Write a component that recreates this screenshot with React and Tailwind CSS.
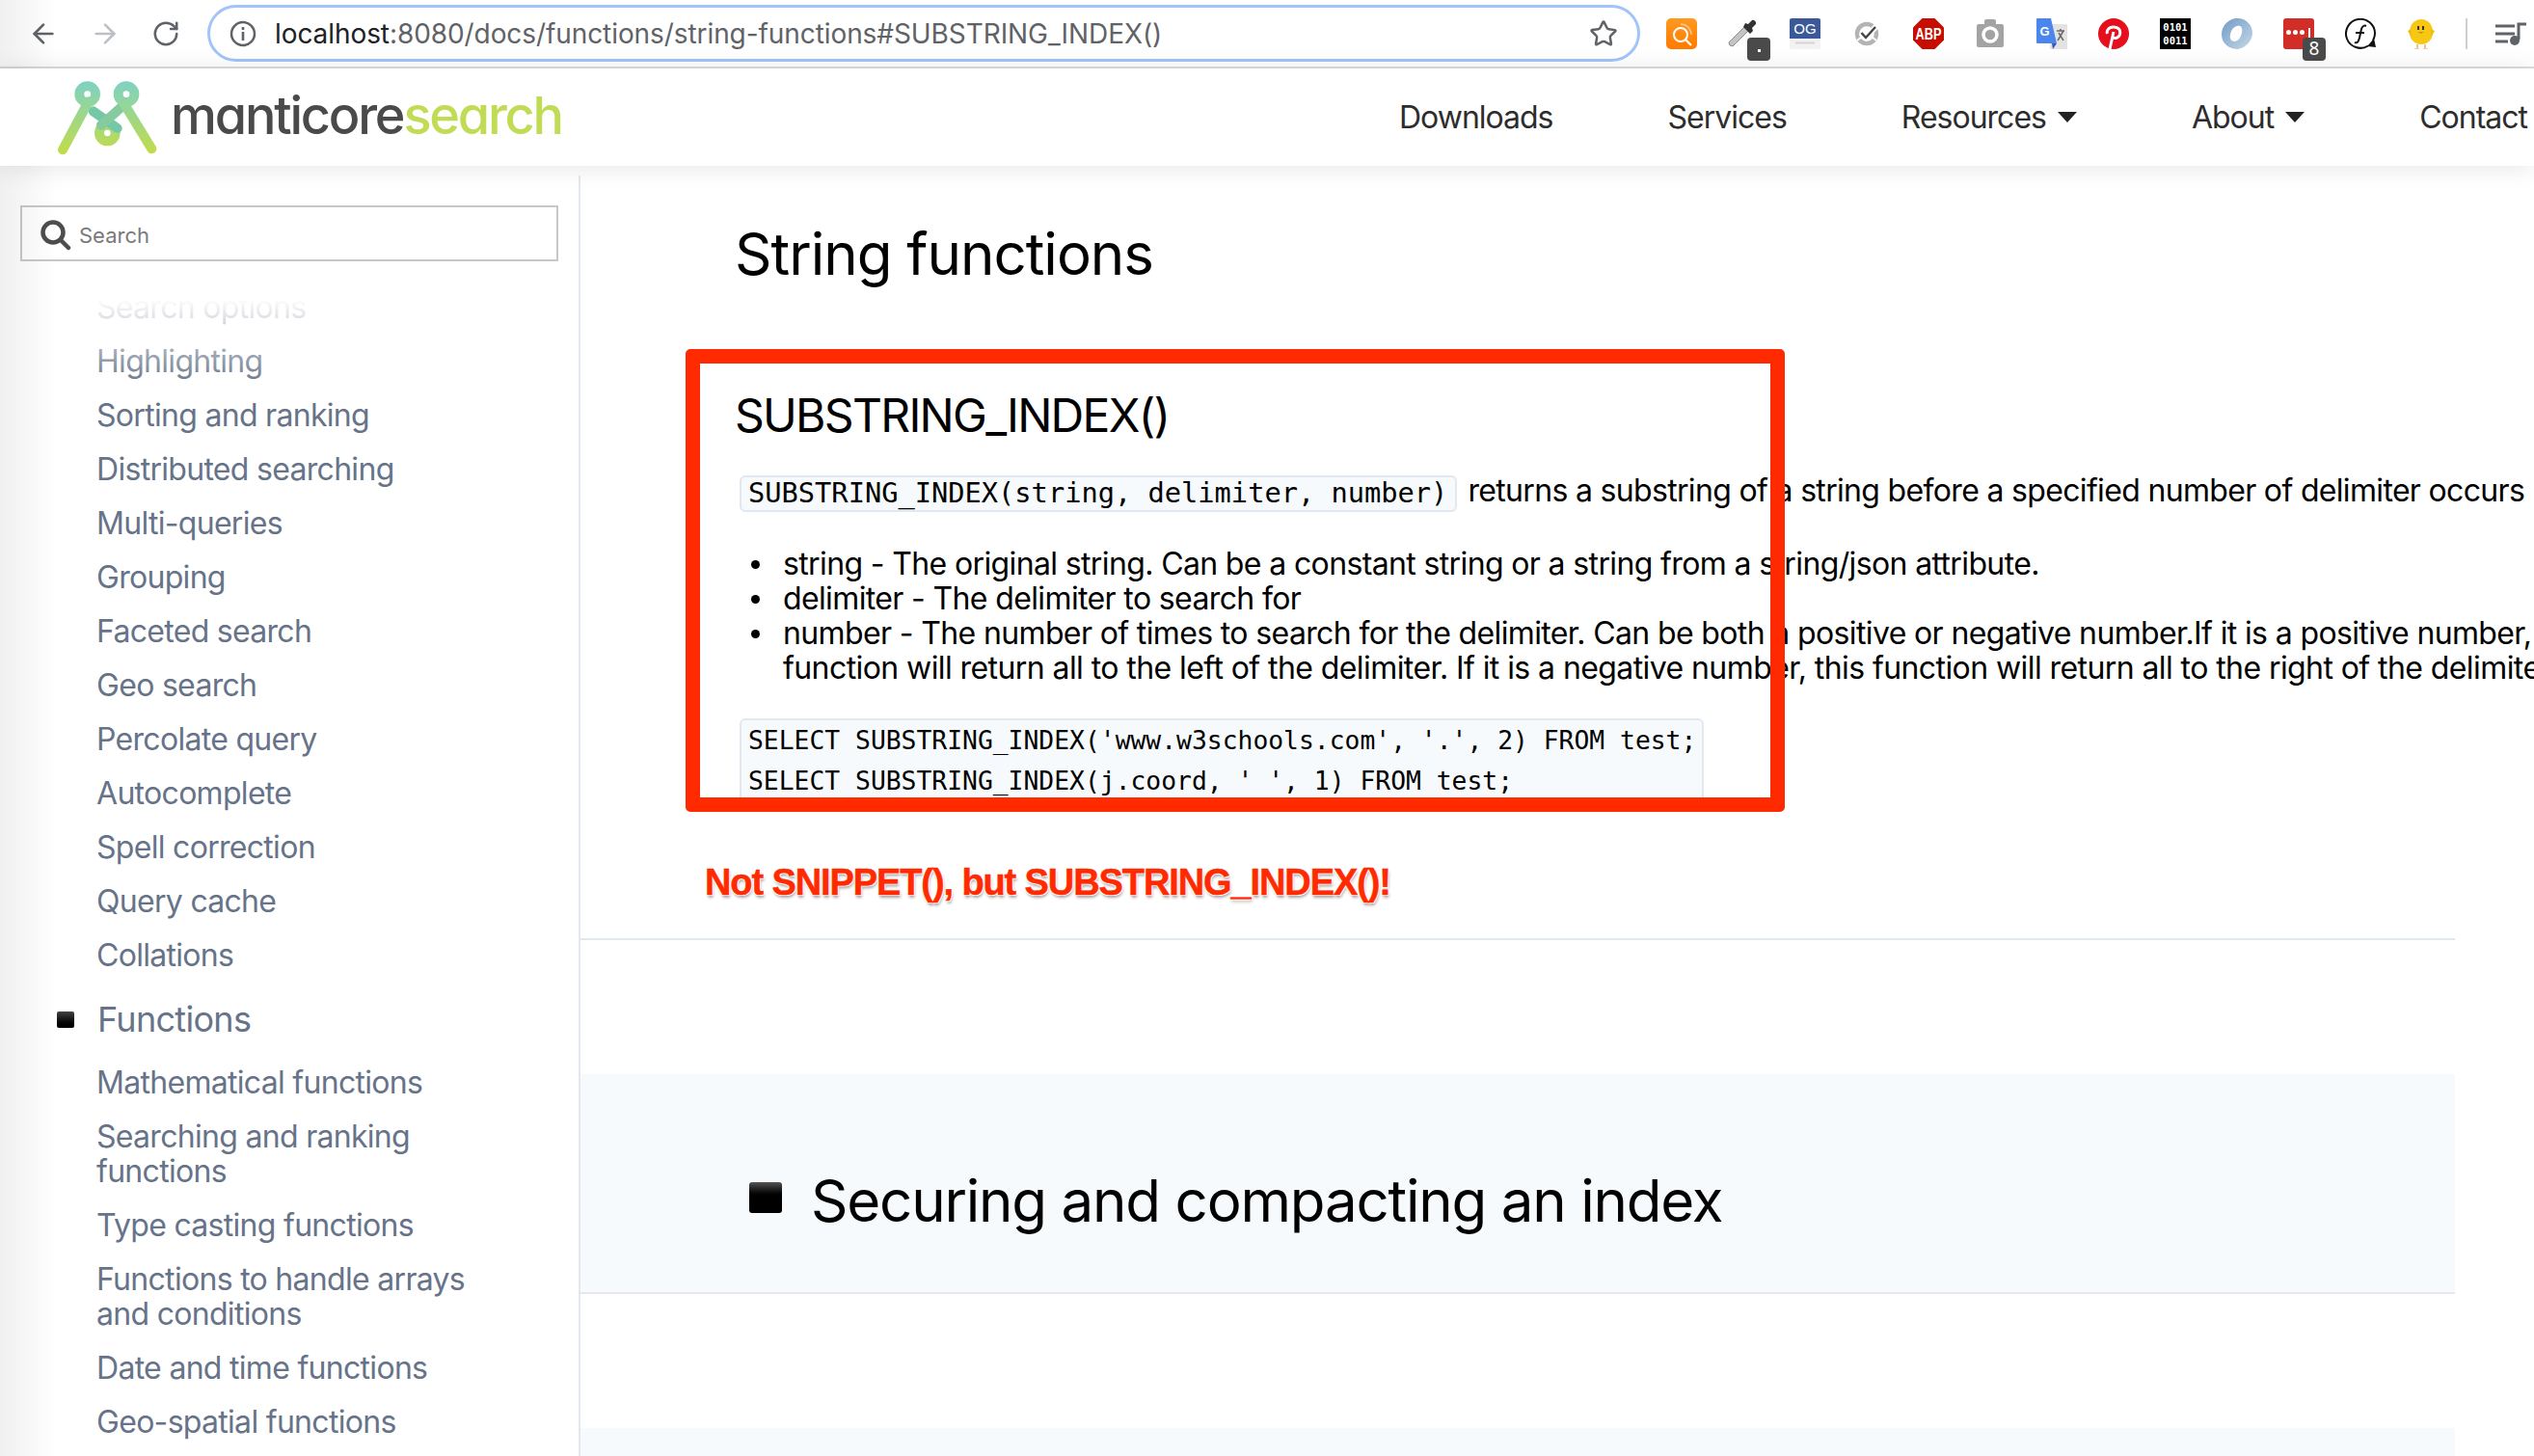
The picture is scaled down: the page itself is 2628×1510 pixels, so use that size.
import { ArrowLeft, ArrowRight, RotateCw, Star } from "lucide-react";

const topItems = [
  "Search options",
  "Highlighting",
  "Sorting and ranking",
  "Distributed searching",
  "Multi-queries",
  "Grouping",
  "Faceted search",
  "Geo search",
  "Percolate query",
  "Autocomplete",
  "Spell correction",
  "Query cache",
  "Collations",
];

const functionItems = [
  "Mathematical functions",
  "Searching and ranking functions",
  "Type casting functions",
  "Functions to handle arrays and conditions",
  "Date and time functions",
  "Geo-spatial functions",
];

const bullet =
  "relative before:absolute before:left-[-33px] before:top-[14px] before:h-[9px] before:w-[9px] before:rounded-full before:bg-black";

function Badge({ children }) {
  return (
    <span className="absolute left-[20px] top-[20px] flex h-[24px] w-[24px] items-center justify-center rounded-[4px] bg-[#4a4a4a] text-[19px] leading-none text-white">
      {children}
    </span>
  );
}

function Extensions() {
  return (
    <div className="ml-[27px] flex items-center gap-[32px]">
      <svg width="32" height="32" viewBox="0 0 32 32">
        <defs>
          <linearGradient id="orange" x1="0" y1="0" x2="0" y2="1">
            <stop offset="0" stopColor="#ff9a1f" />
            <stop offset="1" stopColor="#ff7a00" />
          </linearGradient>
        </defs>
        <rect width="32" height="32" rx="5" fill="url(#orange)" />
        <circle cx="15" cy="17" r="7" fill="none" stroke="#fff" strokeWidth="2" />
        <path d="M20 22l6 6" stroke="#fff" strokeWidth="2.2" />
        <path d="M15 6a11 11 0 0 1 11 11" fill="none" stroke="#ffc88a" strokeWidth="1.5" />
      </svg>
      <div className="relative h-[32px] w-[32px]">
        <svg width="32" height="32" viewBox="0 0 32 32">
          <path d="M2 28l3 1 17-17-4-4L1 25z" fill="#c4c4c4" stroke="#8c8c8c" strokeWidth="1" />
          <path d="M16 9l7 7 3-3-1-3 4-4c1-2-2-5-4-4l-4 4-3-1z" fill="#333" />
        </svg>
        <Badge>
          <span className="mt-[4px] h-[3px] w-[3px] bg-white" />
        </Badge>
      </div>
      <svg width="32" height="32" viewBox="0 0 32 32">
        <rect width="32" height="32" rx="2" fill="#f2f2f2" />
        <path d="M0 2a2 2 0 0 1 2-2h28a2 2 0 0 1 2 2v19H0z" fill="#3b5998" />
        <text x="16" y="15.500" textAnchor="middle" fontSize="15" fontFamily="Liberation Sans, sans-serif" fill="#fff">
          OG
        </text>
        <rect x="6" y="24.500" width="20" height="2" fill="#d4d4d4" />
      </svg>
      <svg width="32" height="32" viewBox="0 0 32 32">
        <circle cx="16" cy="16" r="10" fill="none" stroke="#b4b4b4" strokeWidth="4.500" />
        <path d="M6 23l5-4M26 23l-5-4" stroke="#fff" strokeWidth="2" />
        <path d="M10 15l5 5 11-12" fill="none" stroke="#fff" strokeWidth="6" />
        <path d="M10.500 15l4.500 5 10-11" fill="none" stroke="#444" strokeWidth="2.400" />
      </svg>
      <svg width="32" height="32" viewBox="0 0 32 32">
        <polygon points="9.500,0 22.500,0 32,9.500 32,22.500 22.500,32 9.500,32 0,22.500 0,9.500" fill="#c70d00" />
        <text x="16" y="22" textAnchor="middle" fontSize="16.500" fontWeight="700" fontFamily="Liberation Sans, sans-serif" fill="#fff" textLength="27" lengthAdjust="spacingAndGlyphs">
          ABP
        </text>
      </svg>
      <svg width="32" height="32" viewBox="0 0 32 32">
        <path d="M2 8a2 2 0 0 1 2-2h6V3a2 2 0 0 1 2-2h8a2 2 0 0 1 2 2v3h6a2 2 0 0 1 2 2v20a2 2 0 0 1-2 2H4a2 2 0 0 1-2-2z" fill="#a3a3a3" />
        <circle cx="16" cy="17" r="7" fill="none" stroke="#fff" strokeWidth="3.500" />
      </svg>
      <svg width="32" height="32" viewBox="0 0 32 32">
        <rect x="14" y="6" width="18" height="26" rx="1" fill="#e3e3e3" />
        <path d="M0 1a1 1 0 0 1 1-1h14l6 26H1a1 1 0 0 1-1-1z" fill="#4a86ee" />
        <path d="M16 26h5l-4 6z" fill="#3b56b8" />
        <text x="8.500" y="17.500" textAnchor="middle" fontSize="13" fontWeight="700" fontFamily="Liberation Sans, sans-serif" fill="#fff">
          G
        </text>
        <path d="M21 13h8M25 11v2M22 23l6-10M23 15l5 8" fill="none" stroke="#6b6b6b" strokeWidth="1.500" />
      </svg>
      <svg width="32" height="32" viewBox="0 0 32 32">
        <circle cx="16" cy="16" r="16" fill="#e60f1e" />
        <path d="M12 32l4-18M9.500 16c-1-3 1-7 6.500-7 5 0 7.500 3 6.500 7.500-1 4-5.500 5-7.500 3" fill="none" stroke="#fff" strokeWidth="3" />
      </svg>
      <div className="flex h-[32px] w-[32px] flex-col items-center justify-center bg-black font-['DejaVu_Sans_Mono',monospace] text-[10.500px] font-bold leading-[14px] text-white">
        <span>0101</span>
        <span>0011</span>
      </div>
      <svg width="32" height="32" viewBox="0 0 32 32">
        <defs>
          <linearGradient id="ring" x1="0" y1="0" x2="1" y2="1">
            <stop offset="0" stopColor="#6f9bc8" />
            <stop offset="1" stopColor="#c8d8e6" />
          </linearGradient>
        </defs>
        <path d="M14 0C5 2 0 9 0 17c0 9 8 15 17 15 9-2 15-9 15-17C32 6 24-1 14 0zM16 8c5-1 6 3 5 7-1 5-4 9-8 9-3 0-5-3-4-7 1-5 3-8 7-9z" fill="url(#ring)" fillRule="evenodd" />
      </svg>
      <div className="relative h-[32px] w-[32px]">
        <div className="flex h-[32px] w-[32px] items-center gap-[2px] rounded-[3px] bg-[#d32d27] pb-[2px] pl-[3px]">
          <span className="h-[5px] w-[5px] rounded-full bg-white" />
          <span className="h-[5px] w-[5px] rounded-full bg-white" />
          <span className="h-[5px] w-[5px] rounded-full bg-white" />
          <span className="ml-[2px] h-[10px] w-[2px] bg-white" />
        </div>
        <Badge>8</Badge>
      </div>
      <svg width="32" height="32" viewBox="0 0 32 32">
        <path d="M24 28.500A15 15 0 1 1 31 16c0 3-1 5-2 7" fill="none" stroke="#111" strokeWidth="2" />
        <path d="M23 29l9 1-2-9z" fill="#111" />
        <path d="M10 25c3 1 4-1 5-5l2-9c1-3 3-4 5-3M11 15h9" fill="none" stroke="#111" strokeWidth="2" />
      </svg>
      <svg width="32" height="32" viewBox="0 0 32 32">
        <path d="M15 1c8 0 12 7 12 13 0 8-5 13-12 13S3 22 3 14C3 8 7 1 15 1z" fill="#f7c812" />
        <path d="M1 13l4-2v9zM29 13l-4-2v9z" fill="#f2bd10" />
        <rect x="11" y="8" width="2" height="4" fill="#333" />
        <rect x="16" y="8" width="2" height="4" fill="#333" />
        <path d="M11 14h7l-3 2z" fill="#e08a1e" />
        <path d="M11 27v4M19 27v4M8 32h5M17 32h5" stroke="#e39a4c" strokeWidth="1.200" />
      </svg>
      <div className="ml-[-3px] flex items-center">
        <span className="h-[32px] w-[2px] bg-[#cfcfcf]" />
        <svg className="ml-[29px]" width="32" height="24" viewBox="0 0 32 24">
          <path d="M0 4h20M0 12h20M0 20h13" stroke="#5f6368" strokeWidth="3" />
          <path d="M24 18V2h8" fill="none" stroke="#5f6368" strokeWidth="3" />
          <circle cx="20" cy="19" r="5" fill="#5f6368" />
        </svg>
      </div>
    </div>
  );
}

function Toolbar() {
  return (
    <div className="flex h-[71px] shrink-0 items-center border-b-[2px] border-[#dcdde1] bg-white pl-[29px]">
      <ArrowLeft className="text-[#5f6368]" size={32} strokeWidth={2} />
      <ArrowRight className="ml-[32px] text-[#bdc1c6]" size={32} strokeWidth={2} />
      <RotateCw className="ml-[32px] text-[#5f6368]" size={30} strokeWidth={2} />
      <div className="ml-[28px] flex h-[59px] w-[1486px] items-center rounded-full border-[3px] border-[#a1c4f9] px-[20px]">
        <svg width="28" height="28" viewBox="0 0 28 28">
          <circle cx="14" cy="14" r="12" fill="none" stroke="#5f6368" strokeWidth="2.500" />
          <rect x="12.700" y="12" width="2.600" height="9" fill="#5f6368" />
          <rect x="12.700" y="7" width="2.600" height="3" fill="#5f6368" />
        </svg>
        <span className="ml-[19px] whitespace-nowrap font-['Inter',sans-serif] text-[28px] tracking-[-0.08px] text-[#5f6368]">
          <span className="text-[#202124]">localhost</span>:8080/docs/functions/string-functions#SUBSTRING_INDEX()
        </span>
        <Star className="ml-auto text-[#5f6368]" size={30} strokeWidth={2} />
      </div>
      <Extensions />
    </div>
  );
}

function Logo() {
  return (
    <div className="flex w-[1451px] shrink-0 items-center pl-[50px]">
      <svg width="130" height="90" viewBox="0 0 390 270">
        <defs>
          <linearGradient id="logoGrad" gradientUnits="userSpaceOnUse" x1="0" y1="20" x2="0" y2="250">
            <stop offset="0" stopColor="#7dd2c4" />
            <stop offset="1" stopColor="#c2dc48" />
          </linearGradient>
        </defs>
        <g fill="none" stroke="url(#logoGrad)" strokeWidth="30" strokeLinecap="round">
          <circle cx="184" cy="183" r="25" />
          <path d="M140 115L215 168" stroke="#73c8a8" />
          <path d="M228 102L165 158" stroke="#86cb9f" />
          <circle cx="122" cy="62" r="25" />
          <circle cx="243" cy="62" r="25" />
          <path d="M125 85L45 235" />
          <path d="M232 85L322 232" />
        </g>
      </svg>
      <span className="ml-[-3px] mt-[-4px] font-['Inter',sans-serif] text-[54px] font-medium leading-none tracking-[-2.200px] text-[#4a4a4a] [font-feature-settings:'cv11']">
        manticore<span className="text-[#c0dc55]">search</span>
      </span>
    </div>
  );
}

function Header() {
  return (
    <div className="relative z-10 flex h-[101px] shrink-0 items-center bg-white font-['Inter',sans-serif] text-[32px] tracking-[-1px] text-[#2d2d2d] shadow-[0_2px_24px_rgba(0,0,0,0.1)]">
      <Logo />
      <nav className="flex items-center gap-[119px] whitespace-nowrap">
        <span>Downloads</span>
        <span>Services</span>
        <span className="flex items-center gap-[12px]">
          Resources
          <span className="h-0 w-0 border-x-[10px] border-t-[11px] border-x-transparent border-t-[#222]" />
        </span>
        <span className="flex items-center gap-[12px]">
          About
          <span className="h-0 w-0 border-x-[10px] border-t-[11px] border-x-transparent border-t-[#222]" />
        </span>
        <span>Contact</span>
      </nav>
    </div>
  );
}

function Sidebar() {
  return (
    <aside className="relative mt-[10px] w-[602px] shrink-0 overflow-hidden border-r-[2px] border-[#e2e8f0] pt-[31px] font-['Inter',sans-serif] text-[#667389]">
      <div className="ml-[21px] flex h-[58px] w-[558px] items-center border-[2px] border-[#c8c8c8] pl-[19px] pt-[4px]">
        <svg width="32" height="32" viewBox="0 0 32 32">
          <circle cx="13" cy="13" r="10.500" fill="none" stroke="#4d4d4d" strokeWidth="4.500" />
          <path d="M21 21l8 8" stroke="#4d4d4d" strokeWidth="4.500" strokeLinecap="round" />
        </svg>
        <span className="ml-[8px] text-[22px] text-[#7a7a7a]">Search</span>
      </div>
      <div className="relative pl-[100px] pr-[90px] pt-[30px] text-[32px] leading-[36px] tracking-[-0.7px]">
        <div className="flex flex-col gap-[20px]">
          {topItems.map((item) => (
            <div key={item}>{item}</div>
          ))}
        </div>
        <div className="my-[26px] ml-[-41px] flex h-[44px] items-center text-[36px] leading-[44px] tracking-[-0.7px]">
          <span className="mr-[24px] h-[17px] w-[18px] rounded-[2px] bg-linear-to-b from-[#444] to-black" />
          Functions
        </div>
        <div className="flex flex-col gap-[20px]">
          {functionItems.map((item) => (
            <div key={item}>{item}</div>
          ))}
        </div>
        <div className="absolute left-0 right-0 top-0 h-[130px] bg-linear-to-b from-white from-30% to-transparent" />
      </div>
    </aside>
  );
}

function Article() {
  return (
    <main className="mr-[82px] flex min-w-0 flex-1 flex-col font-['Inter',sans-serif] text-black">
      <section className="h-[803px] shrink-0 whitespace-nowrap border-b-[2px] border-[#e2e8f0] pl-[160px] pt-[55px]">
        <h1 className="text-[60px] leading-[72px] tracking-[-1px]">String functions</h1>
        <h2 className="mt-[104px] text-[48px] leading-[56px] tracking-[-1.700px]">SUBSTRING_INDEX()</h2>
        <p className="mt-[30px] flex h-[40px] items-center text-[32px] tracking-[-0.63px]">
          <code className="ml-[5px] mt-[6px] flex h-[38px] items-center rounded-[6px] border-[2px] border-[#e2e8f0] bg-[#f7fafc] pl-[7px] pr-[8px] font-['DejaVu_Sans_Mono',monospace] text-[28.700px] tracking-normal">
            SUBSTRING_INDEX(string, delimiter, number)
          </code>
          <span className="ml-[11px] tracking-[-0.67px]">returns a substring of a string before a specified number of delimiter occurs</span>
        </p>
        <ul className="mt-[38px] pl-[50px] text-[32px] leading-[36px] tracking-[-0.63px]">
          <li className={bullet}>string - The original string. Can be a constant string or a string from a string/json attribute.</li>
          <li className={bullet}>delimiter - The delimiter to search for</li>
          <li className={bullet}>
            number - The number of times to search for the delimiter. Can be both a positive or negative number.If it is a positive number, this
            <br />
            <span className="tracking-[-0.58px]">
              function will return all to the left of the delimiter. If it is a negative number, this function will return all to the right of the delimiter.
            </span>
          </li>
        </ul>
        <pre className="ml-[5px] mt-[34px] h-[90px] w-[1000px] rounded-[6px] border-[2px] border-[#e2e8f0] bg-[#f7fafc] px-[7px] font-['DejaVu_Sans_Mono',monospace] text-[26.350px] leading-[42px]">
          {"SELECT SUBSTRING_INDEX('www.w3schools.com', '.', 2) FROM test;\nSELECT SUBSTRING_INDEX(j.coord, ' ', 1) FROM test;"}
        </pre>
      </section>
      <section className="mt-[139px] flex h-[228px] shrink-0 items-center border-b-[2px] border-[#e5e7eb] bg-[#f7fafc] pl-[175px] pt-[36px]">
        <span className="mb-[6px] h-[32px] w-[34px] rounded-[3px] bg-linear-to-b from-[#555] via-black to-black" />
        <h2 className="ml-[30px] text-[60px] leading-none tracking-[-1.200px]">Securing and compacting an index</h2>
      </section>
      <section className="mt-[139px] flex-1 bg-[#f7fafc]" />
    </main>
  );
}

export default function App() {
  return (
    <div className="relative flex h-[1510px] w-[2628px] flex-col overflow-hidden bg-white">
      <Toolbar />
      <Header />
      <div className="flex min-h-0 flex-1">
        <Sidebar />
        <Article />
      </div>
      {/* red annotation drawn on top of the page */}
      <div className="absolute left-[711px] top-[362px] h-[480px] w-[1140px] rounded-[5px] border-[15px] border-[#ff2a00]" />
      <div className="absolute left-[731px] top-[892px] whitespace-nowrap font-['Liberation_Sans',sans-serif] text-[38px] font-bold leading-[46px] tracking-[-1.100px] text-[#ff2a00] [-webkit-text-stroke:0.5px_#ff2a00] [text-shadow:1px_1px_0_#fff,-1px_-1px_0_#fff,1px_-1px_0_#fff,-1px_1px_0_#fff,1px_3px_3px_rgba(0,0,0,0.35)]">
        Not SNIPPET(), but SUBSTRING_INDEX()!
      </div>
      {/* soft vignette on the left edge */}
      <div className="pointer-events-none absolute bottom-0 left-0 top-0 w-[60px] bg-linear-to-r from-black/6 to-transparent" />
    </div>
  );
}
